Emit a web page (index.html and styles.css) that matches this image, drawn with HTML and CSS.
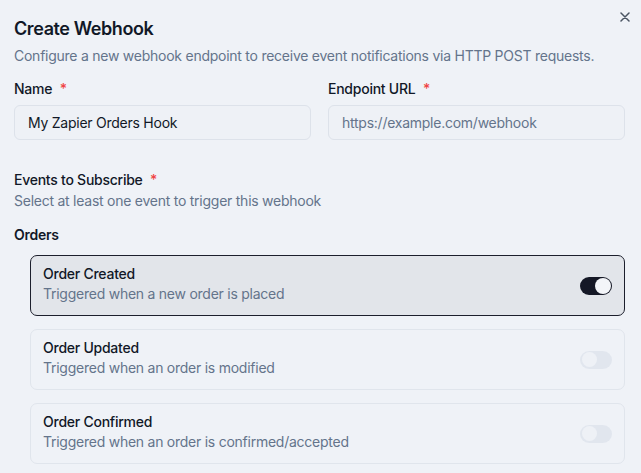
FILE: index.html
```html
<!DOCTYPE html>
<html>
<head>
<meta charset="utf-8">
<link rel="stylesheet" href="styles.css">
</head>
<body>
<div class="dialog">
  <button class="close" aria-label="Close">
    <svg width="10" height="10" viewBox="0 0 10 10"><path d="M1 1L9 9M9 1L1 9" stroke="#4b5563" stroke-width="1.5" stroke-linecap="round"/></svg>
  </button>
  <h1 class="title">Create Webhook</h1>
  <p class="desc">Configure a new webhook endpoint to receive event notifications via HTTP POST requests.</p>
  <div class="fields">
    <div class="field">
      <label class="label">Name <span class="req">*</span></label>
      <div class="input">My Zapier Orders Hook</div>
    </div>
    <div class="field">
      <label class="label">Endpoint URL <span class="req">*</span></label>
      <div class="input placeholder">https://example.com/webhook</div>
    </div>
  </div>
  <div class="events">
    <div class="label">Events to Subscribe <span class="req">*</span></div>
    <div class="hint">Select at least one event to trigger this webhook</div>
  </div>
  <div class="group">Orders</div>
  <div class="cards">
    <div class="card active">
      <div class="card-text">
        <div class="card-title">Order Created</div>
        <div class="card-desc">Triggered when a new order is placed</div>
      </div>
      <span class="toggle on"><span class="knob"></span></span>
    </div>
    <div class="card">
      <div class="card-text">
        <div class="card-title">Order Updated</div>
        <div class="card-desc">Triggered when an order is modified</div>
      </div>
      <span class="toggle"><span class="knob"></span></span>
    </div>
    <div class="card">
      <div class="card-text">
        <div class="card-title">Order Confirmed</div>
        <div class="card-desc">Triggered when an order is confirmed/accepted</div>
      </div>
      <span class="toggle"><span class="knob"></span></span>
    </div>
  </div>
</div>
</body>
</html>
```

FILE: styles.css
```css
* { box-sizing: border-box; }
html, body { margin: 0; padding: 0; }
body {
  background: #eff2f7;
  font-family: Inter, "Noto Sans", sans-serif;
  color: #111827;
  width: 641px;
  height: 473px;
  overflow: hidden;
  letter-spacing: -0.25px;
}
.dialog {
  position: relative;
  padding: 15px 16px 0 14px;
}
.close {
  position: absolute;
  top: 12px;
  right: 11px;
  width: 10px;
  height: 10px;
  padding: 0;
  border: 0;
  background: none;
  display: flex;
}
.title {
  margin: 0;
  font-size: 18px;
  line-height: 28px;
  font-weight: 600;
  color: #111827;
  letter-spacing: -0.4px;
}
.desc {
  margin: 3px 0 0;
  font-size: 14px;
  line-height: 20px;
  color: #64748b;
}
.fields {
  margin-top: 13px;
  display: grid;
  grid-template-columns: 1fr 1fr;
  column-gap: 17px;
}
.field { display: flex; flex-direction: column; }
.label {
  font-size: 14px;
  line-height: 20px;
  font-weight: 500;
  color: #111827;
}
.req { color: #ef4444; margin-left: 4px; }
.input {
  margin-top: 6px;
  height: 35px;
  border: 1px solid #dde2ea;
  border-radius: 6px;
  background: #eef1f6;
  font-size: 14px;
  line-height: 33px;
  padding: 0 12px 0 13px;
  color: #111827;
}
.input.placeholder { color: #64748b; }
.events { margin-top: 30px; }
.hint {
  margin-top: 1px;
  font-size: 14px;
  line-height: 20px;
  color: #64748b;
}
.group {
  margin-top: 14px;
  font-size: 14px;
  line-height: 20px;
  font-weight: 600;
  color: #111827;
}
.cards {
  margin: 10px 0 0 16px;
  display: flex;
  flex-direction: column;
  gap: 13px;
}
.card {
  height: 61px;
  border: 1px solid #e0e5ec;
  border-radius: 7px;
  padding: 8px 12px 11px 12px;
  display: flex;
  align-items: center;
  justify-content: space-between;
  background: #eff2f7;
}
.card.active {
  background: #e2e5ea;
  border-color: #1c1f2c;
}
.card-title {
  font-size: 14px;
  line-height: 20px;
  font-weight: 500;
  color: #111827;
}
.card-desc {
  font-size: 14px;
  line-height: 20px;
  color: #64748b;
}
.toggle {
  width: 32px;
  height: 18px;
  border-radius: 9px;
  background: #dde3ec;
  display: flex;
  align-items: center;
  padding: 0 2px;
  opacity: 0.75;
  margin-top: 3px;
}
.knob {
  width: 15px;
  height: 15px;
  border-radius: 50%;
  background: #eef1f6;
}
.toggle.on {
  background: #151826;
  justify-content: flex-end;
  opacity: 1;
  padding: 0 1px;
}
.toggle.on .knob { background: #f3f5f9; width: 16px; height: 16px; }
```
